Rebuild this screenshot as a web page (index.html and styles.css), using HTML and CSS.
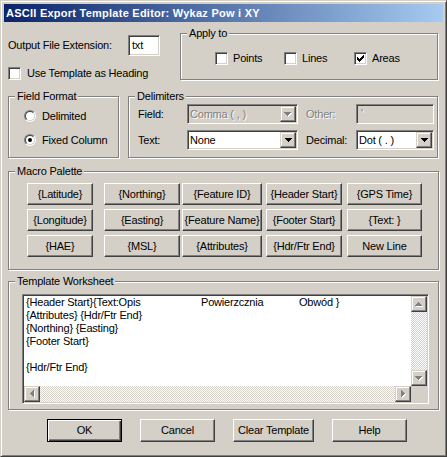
FILE: index.html
```html
<!DOCTYPE html>
<html>
<head>
<meta charset="utf-8">
<title>ASCII Export Template Editor</title>
<link rel="stylesheet" href="styles.css">
</head>
<body>
<div class="window">
  <div class="titlebar">ASCII Export Template Editor: Wykaz Pow i XY</div>
  <div class="content">
    <div class="row1">
      <div class="left-block">
        <div class="ext-row">
          <span class="ext-label">Output File Extension:</span>
          <div class="textbox ext-box">txt</div>
        </div>
        <div class="check-row">
          <span class="checkbox"></span>
          <span>Use Template as Heading</span>
        </div>
      </div>
      <fieldset class="group apply">
        <legend>Apply to</legend>
        <div class="apply-items">
          <span class="check-item"><span class="checkbox"></span>Points</span>
          <span class="check-item"><span class="checkbox"></span>Lines</span>
          <span class="check-item"><span class="checkbox"><svg width="7" height="7" viewBox="0 0 7 7" shape-rendering="crispEdges"><path d="M0 2h1v3h-1zM1 3h1v3h-1zM2 4h1v3h-1zM3 3h1v3h-1zM4 2h1v3h-1zM5 1h1v3h-1zM6 0h1v3h-1z" fill="#000"/></svg></span>Areas</span>
        </div>
      </fieldset>
    </div>

    <div class="row2">
      <fieldset class="group fieldfmt">
        <legend>Field Format</legend>
        <div class="radios">
          <div class="radio-row"><span class="radio"><span></span></span><span>Delimited</span></div>
          <div class="radio-row"><span class="radio on"><span></span></span><span>Fixed Column</span></div>
        </div>
      </fieldset>
      <fieldset class="group delims">
        <legend>Delimiters</legend>
        <div class="delim-grid">
          <span class="dlabel">Field:</span>
          <div class="combo disabled-combo">
            <span class="combo-text disabled">Comma ( , )</span>
            <span class="combo-btn"><svg width="8" height="5" viewBox="0 0 8 5" shape-rendering="crispEdges"><path d="M1 1h7v1h-1v1h-1v1h-1v1h-1v-1h-1v-1h-1v-1h-1z" fill="#fff"/><path d="M0 0h7v1h-1v1h-1v1h-1v1h-1v-1h-1v-1h-1v-1h-1z" fill="#808080"/></svg></span>
          </div>
          <span class="dlabel dlabel2 disabled">Other:</span>
          <div class="textbox other-box"><span class="disabled">'</span></div>

          <span class="dlabel">Text:</span>
          <div class="combo">
            <span class="combo-text">None</span>
            <span class="combo-btn"><svg width="7" height="4" viewBox="0 0 7 4" shape-rendering="crispEdges"><path d="M0 0h7v1h-1v1h-1v1h-1v1h-1v-1h-1v-1h-1v-1h-1z" fill="#000"/></svg></span>
          </div>
          <span class="dlabel dlabel2">Decimal:</span>
          <div class="combo">
            <span class="combo-text">Dot ( . )</span>
            <span class="combo-btn"><svg width="7" height="4" viewBox="0 0 7 4" shape-rendering="crispEdges"><path d="M0 0h7v1h-1v1h-1v1h-1v1h-1v-1h-1v-1h-1v-1h-1z" fill="#000"/></svg></span>
          </div>
        </div>
      </fieldset>
    </div>

    <fieldset class="group macro">
      <legend>Macro Palette</legend>
      <div class="macro-grid">
        <button class="btn w66">{Latitude}</button>
        <button class="btn w76">{Northing}</button>
        <button class="btn w80">{Feature ID}</button>
        <button class="btn w76">{Header Start}</button>
        <button class="btn w75">{GPS Time}</button>

        <button class="btn w66">{Longitude}</button>
        <button class="btn w76">{Easting}</button>
        <button class="btn w80">{Feature Name}</button>
        <button class="btn w76">{Footer Start}</button>
        <button class="btn w75">{Text: }</button>

        <button class="btn w66">{HAE}</button>
        <button class="btn w76">{MSL}</button>
        <button class="btn w80">{Attributes}</button>
        <button class="btn w76">{Hdr/Ftr End}</button>
        <button class="btn w75">New Line</button>
      </div>
    </fieldset>

    <fieldset class="group worksheet">
      <legend>Template Worksheet</legend>
      <div class="ws-inner">
        <div class="ws-box">
          <div class="ws-text"><div><span class="tab1">{Header Start}{Text:Opis</span><span class="tab2">Powierzcznia</span>Obwód }</div><div>{Attributes} {Hdr/Ftr End}</div><div>{Northing} {Easting}</div><div>{Footer Start}</div><div>&nbsp;</div><div>{Hdr/Ftr End}</div></div>
          <div class="vscroll">
            <span class="sbtn"><svg width="8" height="5" viewBox="0 0 8 5" shape-rendering="crispEdges"><path d="M4 1h1v1h1v1h1v1h1v1h-7v-1h1v-1h1v-1h1z" fill="#fff"/><path d="M3 0h1v1h1v1h1v1h1v1h-7v-1h1v-1h1v-1h1z" fill="#808080"/></svg></span>
            <span class="track"></span>
            <span class="sbtn"><svg width="8" height="5" viewBox="0 0 8 5" shape-rendering="crispEdges"><path d="M1 1h7v1h-1v1h-1v1h-1v1h-1v-1h-1v-1h-1v-1h-1z" fill="#fff"/><path d="M0 0h7v1h-1v1h-1v1h-1v1h-1v-1h-1v-1h-1v-1h-1z" fill="#808080"/></svg></span>
          </div>
          <div class="hscroll">
            <span class="sbtn"><svg width="5" height="8" viewBox="0 0 5 8" shape-rendering="crispEdges"><path d="M4 1h1v7h-1v-1h-1v-1h-1v-1h-1v-1h1v-1h1v-1h1z" fill="#fff"/><path d="M3 0h1v7h-1v-1h-1v-1h-1v-1h-1v-1h1v-1h1v-1h1z" fill="#808080"/></svg></span>
            <span class="track"></span>
            <span class="sbtn"><svg width="5" height="8" viewBox="0 0 5 8" shape-rendering="crispEdges"><path d="M1 1h1v1h1v1h1v1h1v1h-1v1h-1v1h-1v1h-1z" fill="#fff"/><path d="M0 0h1v1h1v1h1v1h1v1h-1v1h-1v1h-1v1h-1z" fill="#808080"/></svg></span>
          </div>
          <div class="corner"></div>
        </div>
      </div>
    </fieldset>

    <div class="buttons">
      <button class="btn dlg default">OK</button>
      <button class="btn dlg">Cancel</button>
      <button class="btn dlg wide">Clear Template</button>
      <button class="btn dlg">Help</button>
    </div>
  </div>
</div>
</body>
</html>
```

FILE: styles.css
```css
* { box-sizing: border-box; }

html, body {
  margin: 0;
  padding: 0;
  background: #D4D0C8;
}

body {
  font-family: "Liberation Sans", Arial, sans-serif;
  font-size: 11px;
  line-height: 13px;
  letter-spacing: -0.2px;
  color: #000;
}

.window {
  width: 447px;
  height: 457px;
  border: 1px solid;
  border-color: #D4D0C8 #404040 #404040 #D4D0C8;
  box-shadow: inset 1px 1px #fff, inset -1px -1px #808080;
  padding: 3px;
  background: #D4D0C8;
  overflow: hidden;
}

.titlebar {
  height: 18px;
  line-height: 18px;
  padding-left: 2px;
  background: linear-gradient(to right, #0A246A, #A6CAF0);
  color: #fff;
  font-weight: bold;
  letter-spacing: 0.25px;
  white-space: nowrap;
}

.content {
  padding: 5px 0 0 4px;
}

/* ---------- generic controls ---------- */
.group {
  margin: 0;
  padding: 0;
  min-width: 0;
  border: 1px solid #808080;
  box-shadow: inset 1px 1px #fff, 1px 1px #fff;
}

.group legend {
  margin-left: 6px;
  padding: 0 2px;
  background: #D4D0C8;
  line-height: 13px;
}

.textbox {
  border: 1px solid;
  border-color: #808080 #fff #fff #808080;
  box-shadow: inset 1px 1px #404040, inset -1px -1px #D4D0C8;
  background: #fff;
  padding: 0 0 0 3px;
}

.checkbox {
  flex: none;
  display: block;
  width: 13px;
  height: 13px;
  padding: 2px;
  border: 1px solid;
  border-color: #808080 #fff #fff #808080;
  box-shadow: inset 1px 1px #404040, inset -1px -1px #D4D0C8;
  background: #fff;
}

.checkbox svg { display: block; }

.radio {
  flex: none;
  display: block;
  width: 12px;
  height: 12px;
  border-radius: 50%;
  border: 1px solid;
  border-color: #808080 #fff #fff #808080;
}

.radio > span {
  display: block;
  width: 10px;
  height: 10px;
  border-radius: 50%;
  border: 1px solid;
  border-color: #404040 #D4D0C8 #D4D0C8 #404040;
  background: #fff;
}

.radio.on > span::after {
  content: "";
  display: block;
  width: 4px;
  height: 4px;
  margin: 2px;
  border-radius: 50%;
  background: #000;
}

.disabled {
  color: #808080;
  text-shadow: 1px 1px 0 #fff;
}

.btn {
  font: inherit;
  letter-spacing: inherit;
  color: #000;
  margin: 0;
  padding: 0;
  height: 22px;
  border: 1px solid;
  border-color: #fff #404040 #404040 #fff;
  box-shadow: inset -1px -1px #808080, inset 1px 1px #D4D0C8;
  background: #D4D0C8;
  text-align: center;
  white-space: nowrap;
  overflow: hidden;
}

/* ---------- row 1 ---------- */
.row1 {
  display: flex;
  height: 53px;
}

.left-block {
  width: 172px;
  padding-top: 8px;
}

.ext-row {
  display: flex;
  align-items: center;
  height: 21px;
}

.ext-label { width: 120px; }

.ext-box {
  width: 32px;
  height: 21px;
  line-height: 18px;
}

.check-row {
  display: flex;
  align-items: center;
  gap: 6px;
  margin-top: 11px;
  height: 13px;
}

.apply {
  width: 258px;
  height: 53px;
}

.apply-items {
  display: grid;
  grid-template-columns: 69px 70px auto;
  padding: 12px 0 0 34px;
}

.check-item {
  display: flex;
  align-items: center;
  gap: 5px;
  height: 13px;
}

/* ---------- row 2 ---------- */
.row2 {
  display: flex;
  gap: 9px;
  margin-top: 10px;
}

.fieldfmt {
  width: 111px;
  height: 68px;
}

.radios {
  display: flex;
  flex-direction: column;
  gap: 12px;
  padding: 7px 0 0 15px;
}

.radio-row {
  display: flex;
  align-items: center;
  gap: 6px;
  height: 12px;
}

.delims {
  width: 310px;
  height: 68px;
}

.delim-grid {
  display: grid;
  grid-template-columns: 49px 111px 58px 78px;
  grid-auto-rows: 20px;
  row-gap: 6px;
  align-items: center;
  padding: 1px 0 0 9px;
}

.dlabel2 { padding-left: 8px; }

.combo {
  display: flex;
  height: 20px;
  padding: 1px;
  border: 1px solid;
  border-color: #808080 #fff #fff #808080;
  box-shadow: inset 1px 1px #404040, inset -1px -1px #D4D0C8;
  background: #fff;
}

.combo.disabled-combo { background: #D4D0C8; }

.combo-text {
  flex: 1;
  padding-left: 1px;
  line-height: 16px;
  white-space: nowrap;
  overflow: hidden;
}

.combo-btn, .sbtn {
  flex: none;
  display: flex;
  align-items: center;
  justify-content: center;
  width: 16px;
  height: 16px;
  border: 1px solid;
  border-color: #D4D0C8 #404040 #404040 #D4D0C8;
  box-shadow: inset -1px -1px #808080, inset 1px 1px #fff;
  background: #D4D0C8;
}

.combo-btn svg, .sbtn svg { display: block; }

.other-box {
  height: 20px;
  line-height: 17px;
  background: #D4D0C8;
  padding-left: 4px;
}

/* ---------- macro palette ---------- */
.macro {
  width: 431px;
  height: 105px;
  margin-top: 7px;
}

.macro-grid {
  display: grid;
  grid-template-columns: 77px 78px 84px 81px 75px;
  grid-auto-rows: 22px;
  row-gap: 4px;
  padding: 5px 0 0 18px;
}

.w66 { width: 66px; }
.w76 { width: 76px; }
.w80 { width: 80px; }
.w75 { width: 75px; }

/* ---------- worksheet ---------- */
.worksheet {
  width: 431px;
  height: 135px;
  margin-top: 5px;
}

.ws-inner {
  padding: 6px 0 0 13px;
}

.ws-box {
  display: grid;
  grid-template-columns: 1fr 16px;
  grid-template-rows: 1fr 16px;
  width: 407px;
  height: 110px;
  border: 1px solid;
  border-color: #808080 #fff #fff #808080;
  box-shadow: inset 1px 1px #404040, inset -1px -1px #D4D0C8;
  background: #fff;
  padding: 1px;
}

.ws-text {
  padding-left: 2px;
  white-space: pre;
  overflow: hidden;
  line-height: 13px;
}

.tab1 { display: inline-block; width: 175px; }
.tab2 { display: inline-block; width: 98px; }

.vscroll {
  display: flex;
  flex-direction: column;
}

.hscroll {
  display: flex;
}

.track {
  flex: 1;
  background: repeating-conic-gradient(#fff 0 25%, #D4D0C8 0 50%) 0 0 / 2px 2px;
}

.corner { background: #D4D0C8; }

/* ---------- bottom buttons ---------- */
.buttons {
  display: flex;
  gap: 18px;
  margin: 9px 0 0 39px;
}

.dlg {
  width: 75px;
  height: 23px;
}

.dlg.wide { width: 81px; }

.dlg.default {
  border: 1px solid #000;
  box-shadow: inset 1px 1px #fff, inset -1px -1px #404040, inset -2px -2px #808080;
}
```
